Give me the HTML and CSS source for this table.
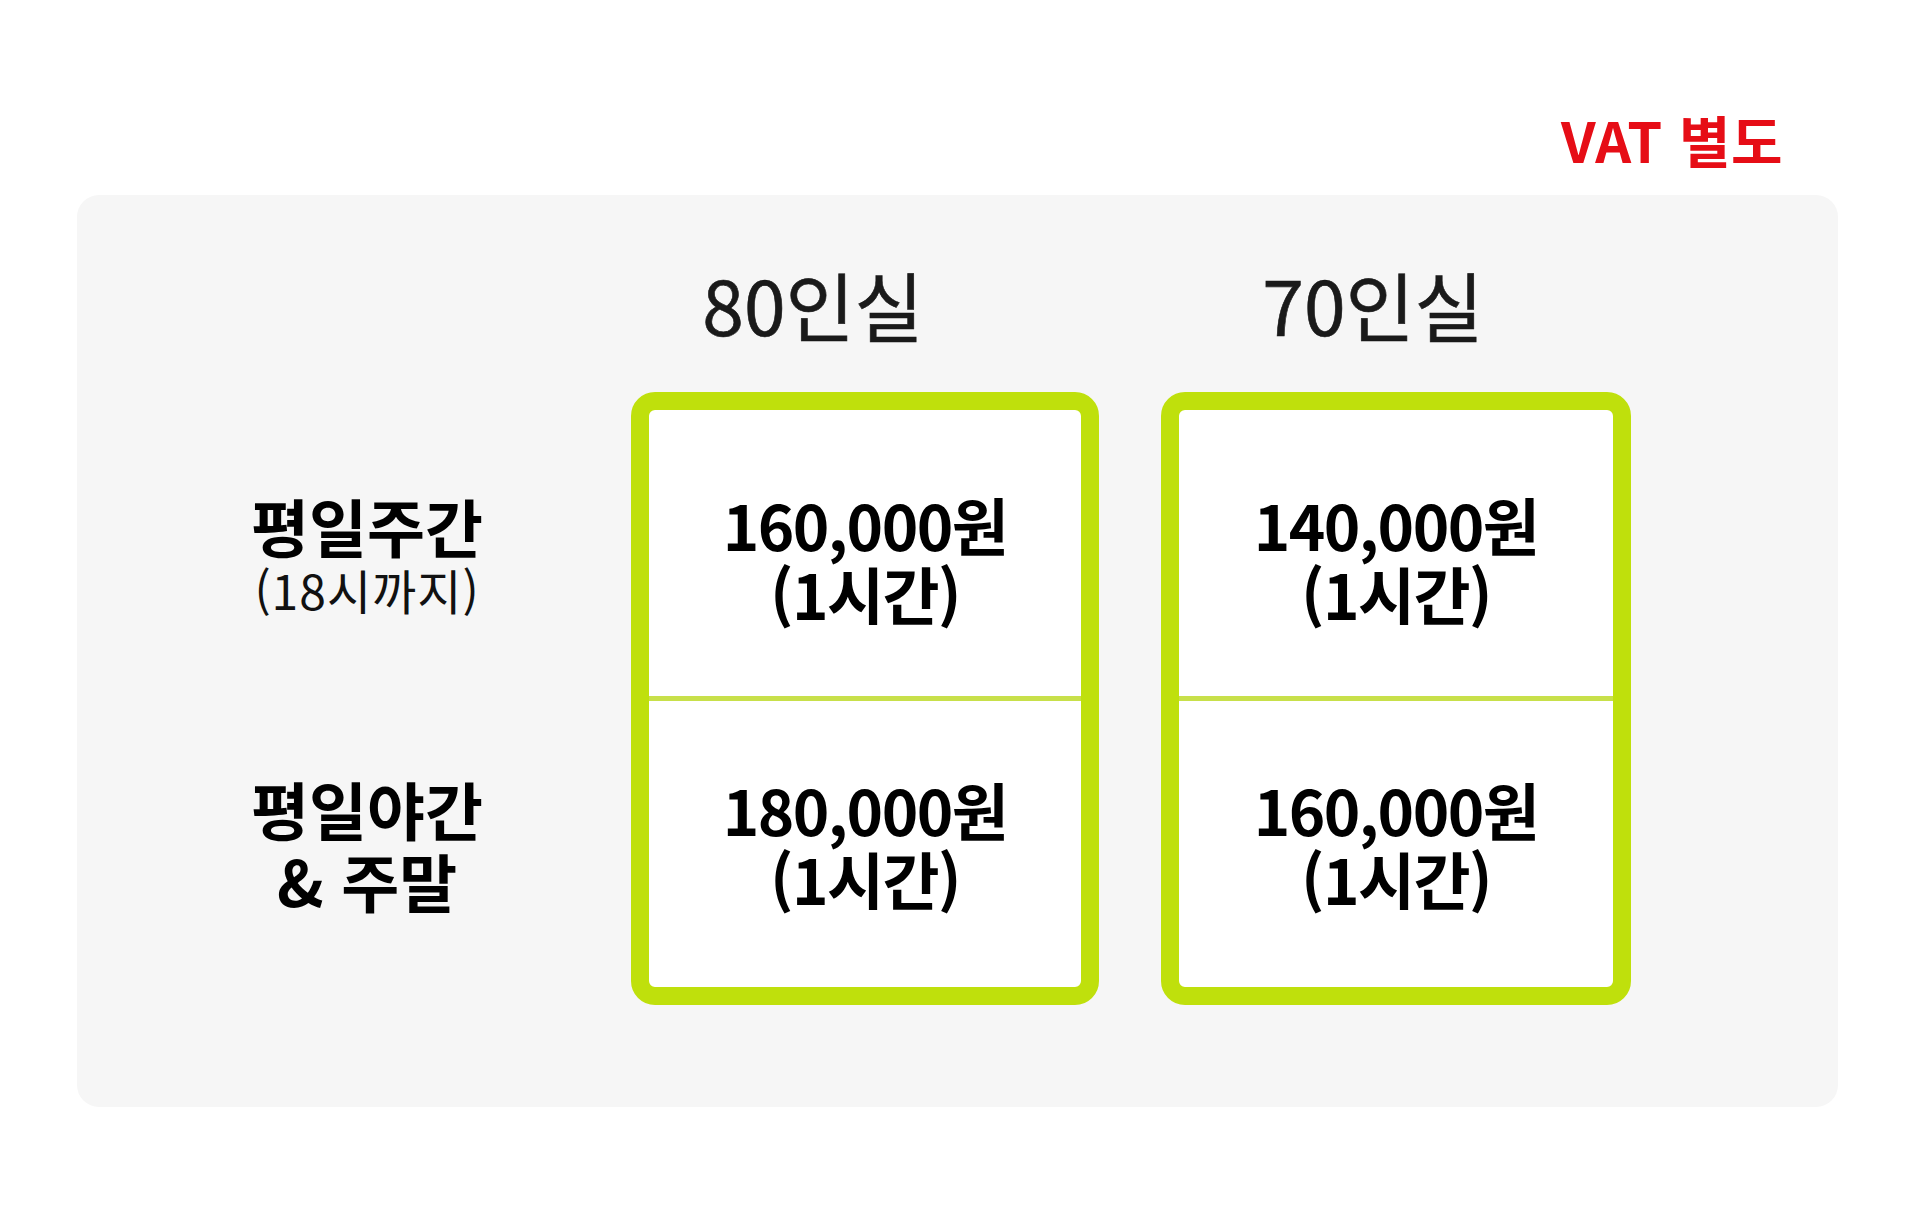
FILE: index.html
```html
<!DOCTYPE html>
<html lang="ko">
<head>
<meta charset="utf-8">
<title>요금표</title>
<link rel="stylesheet" href="styles.css">
</head>
<body>
<div class="vat-row"><span class="vat">VAT 별도</span></div>
<div class="panel">
  <div class="grid">
    <div class="corner"></div>
    <div class="head head-80">80인실</div>
    <div class="head head-70">70인실</div>

    <div class="labels">
      <div class="label-cell">
        <div class="label-main">평일주간</div>
        <div class="label-sub">(18시까지)</div>
      </div>
      <div class="label-gap"></div>
      <div class="label-cell">
        <div class="label-main">평일야간<br>&amp; 주말</div>
      </div>
    </div>

    <div class="box">
      <div class="cell cell-top"><div class="price">160,000원<br>(1시간)</div></div>
      <div class="divider"></div>
      <div class="cell cell-bottom"><div class="price">180,000원<br>(1시간)</div></div>
    </div>

    <div class="box">
      <div class="cell cell-top"><div class="price">140,000원<br>(1시간)</div></div>
      <div class="divider"></div>
      <div class="cell cell-bottom"><div class="price">160,000원<br>(1시간)</div></div>
    </div>
  </div>
</div>
</body>
</html>
```

FILE: styles.css
```css
html, body {
  margin: 0;
  padding: 0;
  background: #ffffff;
}

body {
  width: 1911px;
  height: 1211px;
  overflow: hidden;
  font-family: "Noto Sans CJK KR", "Noto Sans", sans-serif;
  color: #000000;
}

.vat-row {
  display: flex;
  justify-content: flex-end;
  padding-top: 111px;
  padding-right: 128px;
}

.vat {
  font-size: 56px;
  line-height: 56px;
  font-weight: 700;
  color: #e60d16;
  display: block;
  letter-spacing: 0.5px;
}

.panel {
  margin-top: 28px;
  margin-left: 77px;
  width: 1761px;
  height: 912px;
  background: #f6f6f6;
  border-radius: 22px;
  box-sizing: border-box;
  padding-top: 72px;
}

.grid {
  display: grid;
  grid-template-columns: 492px 468px 470px;
  column-gap: 62px;
  grid-template-rows: 74px auto;
  row-gap: 51px;
}

.head {
  font-size: 75px;
  line-height: 74px;
  font-weight: 400;
  text-align: center;
  color: #1a1a1a;
  -webkit-text-stroke: 0.6px #1a1a1a;
}

.head-80 {
  padding-right: 104px;
}

.head-70 {
  padding-right: 46px;
}

.labels {
  display: flex;
  flex-direction: column;
  padding-top: 18px;
  padding-left: 88px;
}

.label-cell {
  height: 286px;
  display: flex;
  flex-direction: column;
  align-items: center;
  justify-content: center;
  text-align: center;
}

.label-gap {
  height: 5px;
}

.label-main {
  font-size: 63px;
  line-height: 72px;
  font-weight: 700;
}

.label-sub {
  font-size: 48px;
  line-height: 56px;
  font-weight: 400;
  letter-spacing: 1px;
  color: #111111;
}

.box {
  border: 18px solid #bfe00c;
  border-radius: 24px;
  background: #ffffff;
  display: flex;
  flex-direction: column;
}

.cell {
  height: 286px;
  display: flex;
  flex-direction: column;
  align-items: center;
  justify-content: center;
}

.cell-top {
  padding-top: 12px;
  box-sizing: border-box;
}

.divider {
  height: 5px;
  background: #c8e04a;
}

.price {
  font-size: 62px;
  line-height: 69px;
  font-weight: 700;
  letter-spacing: -1.5px;
  text-align: center;
}
```
